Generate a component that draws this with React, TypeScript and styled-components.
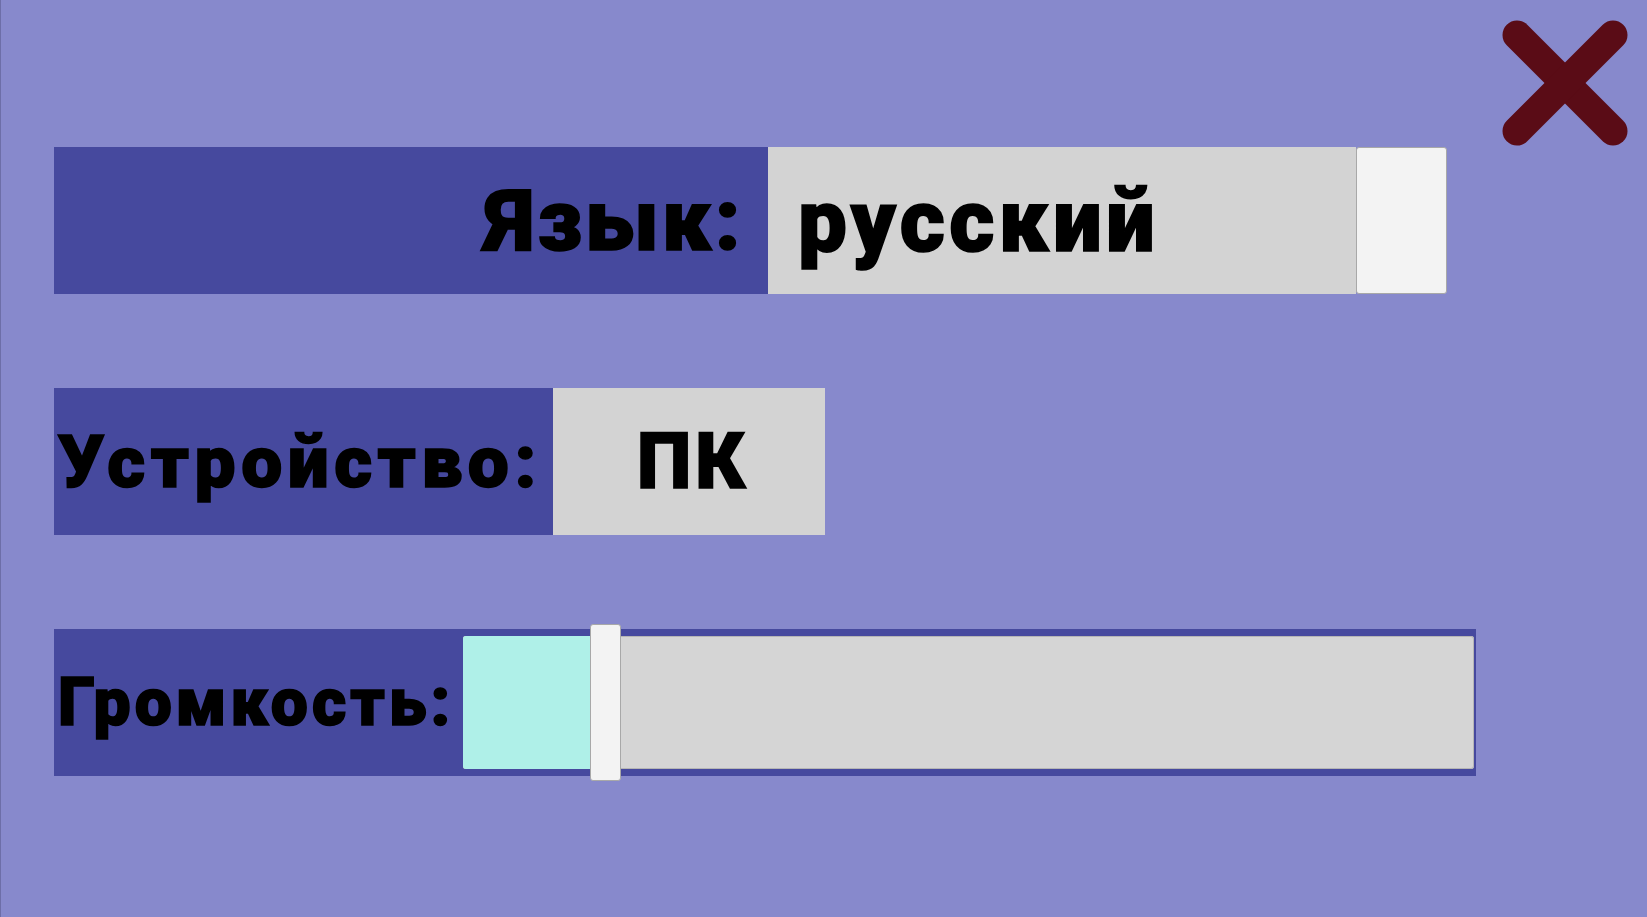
import React from 'react'
import styled, { createGlobalStyle } from 'styled-components'

const GlobalStyle = createGlobalStyle`
  html, body {
    margin: 0;
    padding: 0;
    background: #8789cc;
  }
  body {
    font-family: Roboto, 'Noto Sans', sans-serif;
  }
`

const Screen = styled.div`
  position: relative;
  box-sizing: border-box;
  width: 1647px;
  height: 917px;
  background: #8789cc;
  border-left: 1px solid #6d6ea8;
  padding: 147px 0 0 53px;
  display: flex;
  flex-direction: column;
  gap: 94px;
  overflow: hidden;
`

const Row = styled.div`
  display: flex;
  align-items: stretch;
  height: 147px;
  align-self: flex-start;
`

const heavy = `
  color: #000;
  font-weight: 900;
  white-space: nowrap;
  -webkit-text-stroke: 1.6px #000;
`

const Label = styled.div<{ $width: number; $size: number; $spacing: number; $align?: 'left' | 'right' }>`
  ${heavy}
  box-sizing: border-box;
  width: ${(p) => p.$width}px;
  display: flex;
  align-items: center;
  justify-content: ${(p) => (p.$align === 'right' ? 'flex-end' : 'flex-start')};
  padding: ${(p) => (p.$align === 'right' ? '0 24px 0 0' : '0 0 0 4px')};
  background: #46499e;
  font-size: ${(p) => p.$size}px;
  letter-spacing: ${(p) => p.$spacing}px;
`

const Value = styled.div<{ $width: number; $size: number; $spacing: number; $center?: boolean }>`
  ${heavy}
  box-sizing: border-box;
  width: ${(p) => p.$width}px;
  display: flex;
  align-items: center;
  justify-content: ${(p) => (p.$center ? 'center' : 'flex-start')};
  padding-left: ${(p) => (p.$center ? 8 : 30)}px;
  background: #d3d3d3;
  font-size: ${(p) => p.$size}px;
  letter-spacing: ${(p) => p.$spacing}px;
`

const DropButton = styled.div`
  box-sizing: border-box;
  width: 91px;
  background: #f3f3f3;
  border: 1px solid #a8a8a8;
  border-radius: 3px;
`

const SliderRow = styled.div`
  display: flex;
  align-items: stretch;
  height: 147px;
  width: 1422px;
  background: #46499e;
`

const Track = styled.div`
  position: relative;
  flex: 1;
  margin: 7px 2px 7px 0;
  display: flex;
  background: #d5d5d5;
  border-radius: 3px;
  box-shadow: inset 0 0 0 1px #b5b5b5;
`

const Fill = styled.div`
  background: #aff0e8;
  border-radius: 3px 0 0 3px;
`

const Thumb = styled.div`
  position: absolute;
  top: -12px;
  bottom: -12px;
  width: 31px;
  box-sizing: border-box;
  background: #f3f3f3;
  border: 1px solid #a8a8a8;
  border-radius: 3px;
`

const CloseButton = styled.button`
  position: absolute;
  top: 20px;
  right: 19px;
  width: 126px;
  height: 126px;
  padding: 0;
  border: 0;
  background: none;
  cursor: pointer;
`

const CloseIcon = () => (
  <svg width="126" height="126" viewBox="0 0 126 126">
    <g stroke="#5a0c16" strokeWidth="29" strokeLinecap="round">
      <line x1="15" y1="15" x2="111" y2="111" />
      <line x1="111" y1="15" x2="15" y2="111" />
    </g>
  </svg>
)

const volume = 0.125

const App: React.FC = () => (
  <>
    <GlobalStyle />
    <Screen>
      <Row>
        <Label $width={714} $size={86} $spacing={3.4} $align="right">
          Язык:
        </Label>
        <Value $width={588} $size={87} $spacing={4.3}>
          русский
        </Value>
        <DropButton />
      </Row>

      <Row>
        <Label $width={499} $size={73} $spacing={5.5}>
          Устройство:
        </Label>
        <Value $width={272} $size={77} $spacing={4} $center>
          ПК
        </Value>
      </Row>

      <SliderRow>
        <Label $width={409} $size={66} $spacing={4.1}>
          Громкость:
        </Label>
        <Track>
          <Fill style={{ width: `calc(${volume * 100}% + 1px)` }} />
          <Thumb style={{ left: `calc(${volume * 100}% + 1px)` }} />
        </Track>
      </SliderRow>

      <CloseButton aria-label="close">
        <CloseIcon />
      </CloseButton>
    </Screen>
  </>
)

export default App
